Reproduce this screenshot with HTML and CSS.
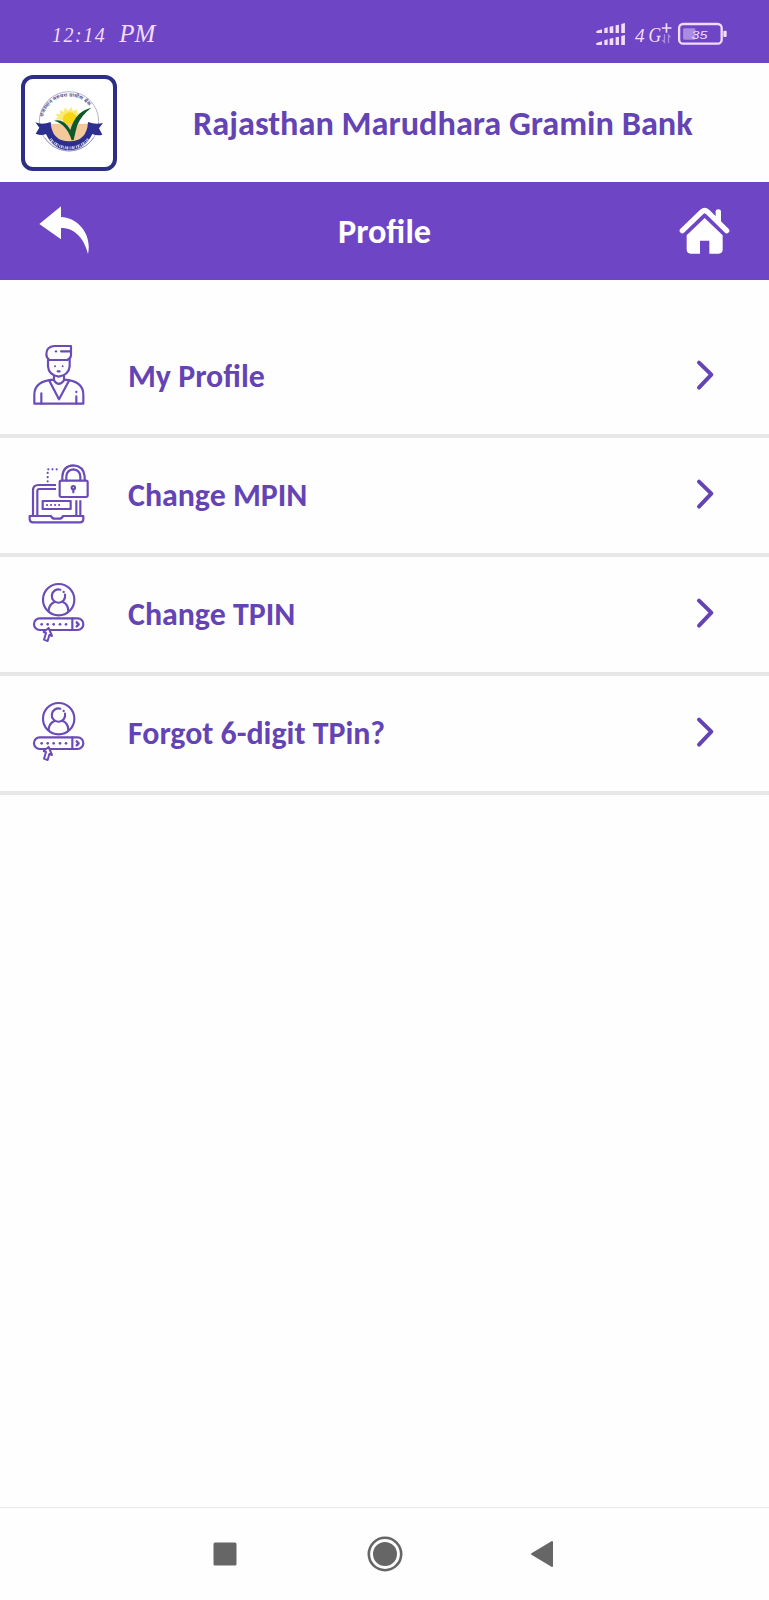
FILE: index.html
```html
<!DOCTYPE html>
<html lang="en">
<head>
    <meta charset="UTF-8">
    <meta name="viewport" content="width=device-width, initial-scale=1.0">
    <title>Profile</title>
    <link rel="stylesheet" href="styles.css">
</head>
<body>
    <!-- Shared icons -->
    <svg class="symbols" width="0" height="0">
        <symbol id="chevron" viewBox="105 54 60 96">
            <path d="M117 65 L154 101 L117 140" fill="none" stroke="#6444b4" stroke-width="12" stroke-linecap="round" stroke-linejoin="round"/>
        </symbol>
        <symbol id="tpin" viewBox="54 34 186 186">
            <g fill="none" stroke="#6a4bb8" stroke-width="6.5" stroke-linecap="round" stroke-linejoin="round">
                <circle cx="146" cy="87" r="47"/>
                <path d="M151 57 A20 20 0 1 0 165 72"/>
                <path d="M116 122 C116 108 122 99 133 94 M159 94 C170 99 175 108 175 122"/>
                <rect x="72" y="143" width="148" height="35" rx="17"/>
                <path d="M187 143 V178"/>
                <path d="M200 155 L206 161 L200 167" stroke-width="7"/>
                <path d="M116 172 L101 184 L108 187 L102 207 L113 211 L118 193 L126 196 Z" fill="#fff" stroke-width="6"/>
            </g>
            <g fill="#6a4bb8">
                <circle cx="161" cy="64" r="3.5"/>
                <circle cx="95" cy="161" r="4"/>
                <circle cx="113" cy="161" r="4"/>
                <circle cx="131" cy="161" r="4"/>
                <circle cx="150" cy="161" r="4"/>
                <circle cx="168" cy="161" r="4"/>
            </g>
        </symbol>
    </svg>

    <div class="status-bar">
        <div class="time"><span>12:14</span><span class="ampm">PM</span></div>
        <svg class="status-icons" viewBox="105 65 400 72">
            <g fill="#f3dcfb">
                <path d="M109 92 L126 87 V98 H109 Z M133 84 L143 81 V98 H133 Z M149 79 L160 77 V98 H149 Z M167 75 L177 73 V98 H167 Z M184 71 L195 68 V98 H184 Z"/>
                <path d="M109 128 L126 123 V134 H109 Z M133 120 L143 117 V134 H133 Z M149 115 L160 113 V134 H149 Z M167 111 L177 109 V134 H167 Z M184 107 L195 104 V134 H184 Z"/>
                <rect x="491" y="91" width="10" height="19" rx="3"/>
            </g>
            <rect x="358" y="71" width="128" height="59" rx="12" fill="none" stroke="#f3dcfb" stroke-width="7"/>
            <rect x="370" y="84" width="37" height="34" rx="4" fill="#a98be0"/>
            <text class="net" x="225" y="124" font-size="58">4</text>
            <text class="net" x="266" y="124" font-size="60" textLength="38" lengthAdjust="spacingAndGlyphs">G</text>
            <path d="M306 83 H335 M320 69 V97" stroke="#f3dcfb" stroke-width="5"/>
            <path d="M314 102 V126 L308 119 M326 128 V104 L332 111" fill="none" stroke="#a98be0" stroke-width="4"/>
            <text class="battery" x="395" y="116" font-size="34" textLength="48" lengthAdjust="spacingAndGlyphs">35</text>
        </svg>
    </div>

    <header class="bank-header">
        <svg class="logo" viewBox="33 30 288 288">
            <defs>
                <path id="arcTop" d="M99 156 A79 79 0 0 1 245 135"/>
            </defs>
            <rect x="39" y="36" width="276" height="276" rx="30" fill="#fff" stroke="#2d2f86" stroke-width="12"/>
            <circle cx="177" cy="169" r="89" fill="#fff" stroke="#8c8cb8" stroke-width="2"/>
            <text class="seal-text"><textPath href="#arcTop" textLength="176">राजस्थान मरुधरा ग्रामीण बैंक</textPath></text>
            <!-- Sun -->
            <path d="M133 163 L144 157 L136 147 L150 147 L149 135 L161 140 L165 127 L174 137 L184 126 L189 139 L202 132 L201 145 L216 145 L202 170 L184 190 L160 166 Z" fill="#fbe979"/>
            <circle cx="180" cy="164" r="22" fill="#f7d618"/>
            <!-- Field and ribbon -->
            <path d="M122 176 H234 Q234 226 178 229 Q122 226 122 176 Z" fill="#f3c99c"/>
            <path d="M76 172 Q97 181 122 171 Q125 229 178 229 Q231 229 234 171 Q256 180 279 174 L267 190 L277 209 Q262 213 247 207 Q223 255 178 256 Q130 255 108 207 Q94 213 77 206 L88 188 Z" fill="#2d2f90"/>
            <path d="M121 222 A74 74 0 0 0 235 222" fill="none" stroke="#c9c9ea" stroke-width="9" stroke-dasharray="3 2 5 2 2 3"/>
            <path d="M105 218 A86 86 0 0 0 250 218" fill="none" stroke="#8c8cb8" stroke-width="2"/>
            <!-- Leaf -->
            <path d="M132 167 Q162 160 181 195 Q196 139 244 128 Q214 151 202 180 Q196 201 191 225 L185 226 Q170 177 132 167 Z" fill="#0d5a28"/>
        </svg>
        <h1>Rajasthan Marudhara Gramin Bank</h1>
    </header>

    <div class="title-bar">
        <svg class="back" viewBox="114 75 156 150">
            <path d="M118 132 L183 79 V111 C233 113 277 162 264 222 C252 173 222 143 183 144 V178 Z" fill="#fff"/>
        </svg>
        <h2>Profile</h2>
        <svg class="home" viewBox="117 78 153 147">
            <path d="M227 120 V94 Q227 88 235 88 Q243 88 243 94 V130 Z" fill="#fff"/>
            <path d="M127 152 L186 95 Q194 88 202 95 L260 152" fill="none" stroke="#fff" stroke-width="16" stroke-linecap="round"/>
            <path d="M194 114 L248 166 V208 Q248 221 236 221 H208 V182 H180 V221 H152 Q140 221 140 208 V166 Z" fill="#fff"/>
        </svg>
    </div>

    <main class="menu">
        <div class="menu-item">
            <svg class="icon" viewBox="54 40 186 186">
                <g fill="none" stroke="#6a4bb8" stroke-width="6.5" stroke-linecap="round" stroke-linejoin="round">
                    <path d="M183 46 H133 Q109 48 109 70 Q109 82 118 88 H172 Q182 83 183 74 Z M182 62 H153"/>
                    <path d="M114 88 V107 Q116 133 146 138 Q176 133 179 107 V85"/>
                    <path d="M132 136 V149 Q146 170 162 149 V136"/>
                    <path d="M132 147 C98 149 73 161 73 192 V219 H220 V192 C220 161 195 149 162 147"/>
                    <path d="M118 150 L147 206 L177 150 M94 188 V219 M199 197 V219"/>
                    <path d="M143 122 H149"/>
                </g>
                <g fill="#6a4bb8">
                    <circle cx="138" cy="62" r="3.5"/>
                    <circle cx="135" cy="107" r="3"/>
                    <circle cx="158" cy="107" r="3"/>
                    <circle cx="199" cy="184" r="3.5"/>
                </g>
            </svg>
            <span class="label">My Profile</span>
            <svg class="chevron"><use href="#chevron"/></svg>
        </div>
        <div class="menu-item">
            <svg class="icon" viewBox="54 37 186 186">
                <g fill="none" stroke="#6a4bb8" stroke-width="6.5" stroke-linecap="round" stroke-linejoin="round">
                    <path d="M138 103 H86 Q69 103 69 119 V196 M138 115 H88 Q82 115 82 121 V196 M199 149 V196 M211 149 V196" stroke-linecap="butt"/>
                    <path d="M59 196 H123 Q126 204 134 204 H148 Q156 204 159 196 H220 V206 Q219 215 210 215 H69 Q60 215 59 206 Z"/>
                    <rect x="98" y="151" width="84" height="24"/>
                    <rect x="149" y="90" width="84" height="49" rx="5"/>
                    <path d="M157 89 V77 Q159 46 190 44 Q221 46 224 77 V89 M169 89 V77 Q171 57 190 56 Q209 57 211 77 V89"/>
                    <circle cx="190" cy="111" r="5"/>
                    <path d="M190 117 V125"/>
                    <path d="M111 163 H150" stroke-dasharray="0.1 12"/>
                    <path d="M113 92 V56 H152" stroke-dasharray="0.1 12.5"/>
                </g>
            </svg>
            <span class="label">Change MPIN</span>
            <svg class="chevron"><use href="#chevron"/></svg>
        </div>
        <div class="menu-item">
            <svg class="icon"><use href="#tpin"/></svg>
            <span class="label">Change TPIN</span>
            <svg class="chevron"><use href="#chevron"/></svg>
        </div>
        <div class="menu-item">
            <svg class="icon"><use href="#tpin"/></svg>
            <span class="label">Forgot 6-digit TPin?</span>
            <svg class="chevron"><use href="#chevron"/></svg>
        </div>
    </main>

    <nav class="nav-bar">
        <svg width="24" height="24" viewBox="0 0 24 24"><rect x="0.5" y="0.5" width="23" height="23" rx="1.5" fill="#666"/></svg>
        <svg class="nav-home" width="36" height="36" viewBox="0 0 36 36"><circle cx="18" cy="18" r="16.2" fill="none" stroke="#666" stroke-width="2.6"/><circle cx="18" cy="18" r="12" fill="#666"/></svg>
        <svg width="24" height="28" viewBox="0 0 24 28"><path d="M2 14 L22 2 V26 Z" fill="#666" stroke="#666" stroke-width="2" stroke-linejoin="round"/></svg>
    </nav>
</body>
</html>
```

FILE: styles.css
```css
/* Global styles */
body {
    font-family: Calibri, Carlito, Lato, sans-serif;
    margin: 0;
    min-height: 1600px;
    background-color: #fefefe;
    color: #6444b4;
    display: flex;
    flex-direction: column;
}

.symbols {
    position: absolute;
}

svg {
    display: block;
    flex-shrink: 0;
}

/* Status bar */
.status-bar {
    height: 63px;
    box-sizing: border-box;
    padding: 5px 41px 0 52px;
    background-color: #6e45c4;
    display: flex;
    align-items: center;
    justify-content: space-between;
}

.time {
    display: flex;
    align-items: baseline;
    gap: 13px;
    font-family: "Liberation Serif", serif;
    font-style: italic;
    font-size: 20px;
    letter-spacing: 1.5px;
    color: #f3dcfb;
}

.ampm {
    font-size: 25px;
    letter-spacing: 0;
}

.status-icons {
    width: 133px;
    height: 24px;
}

.net, .battery {
    font-family: "Liberation Serif", serif;
    font-style: italic;
    fill: #f3dcfb;
}

.battery {
    font-family: "Liberation Sans", sans-serif;
}

/* Bank header */
.bank-header {
    height: 119px;
    box-sizing: border-box;
    padding: 12px 0 0 21px;
    display: flex;
}

.logo {
    width: 96px;
    height: 96px;
}

.seal-text {
    font-family: "Noto Sans", sans-serif;
    font-size: 15px;
    font-weight: bold;
    fill: #55558f;
}

h1, h2 {
    margin: 0;
    font-size: 34.3px;
    font-weight: bold;
    line-height: 42px;
    white-space: nowrap;
}

h1 {
    margin: 27px 0 0 76px;
}

/* Title bar */
.title-bar {
    height: 98px;
    box-sizing: border-box;
    padding: 0 39px 0 38px;
    background-color: #6e45c4;
    color: #fff;
    display: flex;
    align-items: center;
    justify-content: space-between;
}

.back {
    width: 52px;
    height: 50px;
    margin-bottom: 2px;
}

.home {
    width: 51px;
    height: 49px;
    margin-bottom: 2px;
}

/* Menu */
.menu {
    padding-top: 39px;
    flex: 1;
}

.menu-item {
    height: 119px;
    box-sizing: border-box;
    padding: 0 54px 4px 28px;
    border-bottom: 4px solid #e7e7e7;
    display: flex;
    align-items: center;
}

.icon {
    width: 62px;
    height: 62px;
}

.label {
    margin-left: 38px;
    padding-top: 3px;
    flex: 1;
    font-size: 31.9px;
    font-weight: bold;
    white-space: nowrap;
}

.chevron {
    width: 20px;
    height: 32px;
}

/* Navigation bar */
.nav-bar {
    height: 93px;
    box-sizing: border-box;
    padding-left: 213px;
    border-top: 1px solid #e9e9e9;
    display: flex;
    align-items: center;
}

.nav-home {
    margin: 0 127px 0 130px;
}
```
